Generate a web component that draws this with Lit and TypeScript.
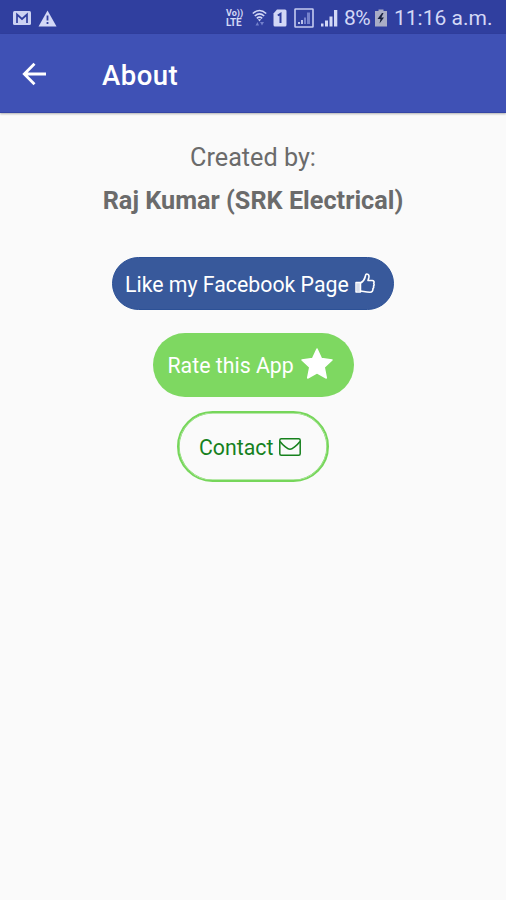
import { LitElement, html, css } from "lit";
import { customElement } from "lit/decorators.js";

@customElement("status-bar")
class StatusBar extends LitElement {
  static styles = css`
    :host {
      display: flex;
      align-items: center;
      box-sizing: border-box;
      height: 34px;
      padding: 2px 14px 0 13px;
      background: #303f9f;
      color: #d3d8f6;
      font: 21px/32px Roboto, sans-serif;
      white-space: nowrap;
    }
    svg { display: block; flex: none; }
    .alert { margin-left: 7px; }
    .volte {
      margin-left: auto;
      width: 18px;
      font-size: 9px;
      line-height: 9px;
      font-weight: 700;
    }
    .volte div { height: 9px; }
    .volte .lte { font-size: 10px; letter-spacing: -0.2px; }
    .wifi { margin-left: 8px; }
    .sim { margin-left: 6px; }
    .boxed { margin-left: 7px; }
    .signal { margin-left: 6px; }
    .pct { margin-left: 6px; width: 28px; letter-spacing: -0.6px; }
    .batt { margin-left: 3px; }
    .time { margin-left: 7px; width: 98px; }
  `;
  render() {
    return html`
      <svg width="18" height="14" viewBox="0 0 18 14">
        <rect width="18" height="14" rx="1.5" fill="#ccd2f2" />
        <path d="M4 12V3.500L9 8l5-4.500V12" fill="none" stroke="#303f9f" stroke-width="1.700" />
      </svg>
      <svg class="alert" width="19" height="17" viewBox="0 0 19 17">
        <path d="M9.500 .5 18.500 16.500H.5Z" fill="#d3d8f6" />
        <path d="M9.500 5.500v5M9.500 12v2" stroke="#303f9f" stroke-width="1.800" />
      </svg>
      <div class="volte"><div>Vo))</div><div class="lte">LTE</div></div>
      <svg class="wifi" width="15" height="18" viewBox="0 0 15 18">
        <g fill="none" stroke="#d3d8f6" stroke-width="1.600">
          <path d="M.8 4.500Q7.500-1.500 14.200 4.500" />
          <path d="M2.800 7Q7.500 2.800 12.200 7" />
          <path d="M4.800 9.300Q7.500 7 10.200 9.300" />
        </g>
        <path d="M5.800 10.200h3.400L7.500 12.500Z" fill="#d3d8f6" />
        <path d="M3.500 16.500 5.500 13l1.500 3.500ZM8 13h4l-2 3.500Z" fill="#7380cb" />
      </svg>
      <svg class="sim" width="14" height="18" viewBox="0 0 14 18">
        <path d="M4 .5H12Q13.500 .5 13.500 2V16Q13.500 17.500 12 17.500H2Q.5 17.500 .5 16V4.500Z" fill="#d3d8f6" />
        <path d="M4.800 6.500 7.500 4.800V14" fill="none" stroke="#303f9f" stroke-width="2" />
      </svg>
      <svg class="boxed" width="20" height="20" viewBox="0 0 20 20">
        <rect x="1" y="1" width="18" height="18" rx=".5" fill="none" stroke="#c5cbf0" stroke-width="1.600" />
        <path d="M4 16v-2h2v2M7 16v-4h2v4" fill="#bac1eb" />
        <path d="M10 16V9.500h2V16M13 16V4.500h3V16" fill="#7682cc" />
      </svg>
      <svg class="signal" width="18" height="18" viewBox="0 0 18 18">
        <path d="M1 17.500v-3h2.500v3M5 17.500v-6h3v6M9.500 17.500v-10h3v10M14 17.500V1h3.300v16.500" fill="#d3d8f6" />
      </svg>
      <span class="pct">8%</span>
      <svg class="batt" width="12" height="18" viewBox="0 0 12 18">
        <path d="M3.500 .5h5V2H12V17.500H0V2h3.500Z" fill="#a9adc6" />
        <path d="M7 4 2.500 10H5.500L4.500 14.500 9 8.500H6.300L8.500 4Z" fill="#16203f" />
      </svg>
      <span class="time">11:16 a.m.</span>
    `;
  }
}

@customElement("app-root")
class AppRoot extends LitElement {
  static styles = css`
    :host {
      display: flex;
      flex-direction: column;
      height: 900px;
      background: #fafafa;
      font-family: Roboto, sans-serif;
      white-space: nowrap;
    }
    svg { display: block; flex: none; }
    .toolbar {
      display: flex;
      align-items: center;
      box-sizing: border-box;
      height: 79px;
      padding: 1px 22px 0;
      background: #3f51b5;
      color: #fff;
      border-bottom: 1px solid #3445a5;
      box-shadow: 0 1px 2px rgba(0, 0, 0, 0.3);
    }
    .title {
      margin: 4px 0 0 55px;
      font-size: 27.500px;
      line-height: 34px;
      font-weight: 500;
      letter-spacing: 0.5px;
    }
    .content {
      display: flex;
      flex-direction: column;
      align-items: center;
      padding-top: 28px;
      color: #6b6b6b;
    }
    .label { font-size: 25.200px; line-height: 34px; }
    .author {
      margin-top: 9px;
      font-size: 25.250px;
      line-height: 34px;
      font-weight: 700;
    }
    .btn {
      display: flex;
      align-items: center;
      box-sizing: border-box;
      border-radius: 36px;
      color: #fff;
      font-size: 21.300px;
      line-height: 28px;
    }
    .facebook {
      width: 282px;
      height: 53px;
      margin-top: 39px;
      padding: 2px 0 0 12px;
      background: #38599b;
      border: 1px solid #2c5196;
    }
    .facebook span { width: 230px; }
    .facebook svg { margin-top: -3px; }
    .rate { width: 201px; height: 64px; margin-top: 23px; padding: 2px 0 0 15px; background: #7ed861; }
    .rate span { width: 132px; }
    .rate svg { margin-top: -5px; }
    .contact {
      width: 152px;
      height: 71px;
      margin-top: 14px;
      padding: 2px 0 0 20px;
      border: 2px solid #76d65a;
      box-shadow: inset 0 0 0 0.600px #76d65a;
      color: #16811d;
    }
    .contact span { width: 80px; }
    .contact svg { margin-top: -2px; }
  `;
  render() {
    return html`
      <status-bar></status-bar>
      <header class="toolbar">
        <svg width="25" height="24" viewBox="0 0 25 24">
          <path d="M12.500 1.800 2.300 12l10.200 10.200M2.500 12H24" fill="none" stroke="#fff" stroke-width="2.800" />
        </svg>
        <div class="title">About</div>
      </header>
      <main class="content">
        <div class="label">Created by:</div>
        <div class="author">Raj Kumar (SRK Electrical)</div>
        <div class="btn facebook">
          <span>Like my Facebook Page</span>
          <svg width="20" height="21" viewBox="0 0 20 21">
            <path d="M1 9.500H5.500V19H1Z" fill="none" stroke="#fff" stroke-width="1.500" stroke-linejoin="round" />
            <path d="M1.500 10h3.500v8.500h-3.500Z" fill="#fff" fill-opacity=".8" />
            <path d="M5.500 10C8 8.500 9.800 6 10.300 3.500 10.500 2 10.800 1 11.800 1c2 0 2.500 1.700 2 3.800L13 7.500h4.200c1.600 0 2.300 1.500 1.500 2.800.6 1 .5 2-.2 2.800.4 1 .1 2-.6 2.600.2 2-.8 3.500-2.900 3.500-4.500 0-6-.8-9.500-1.200" fill="none" stroke="#fff" stroke-width="1.600" stroke-linejoin="round" />
          </svg>
        </div>
        <div class="btn rate">
          <span>Rate this App</span>
          <svg width="34" height="34" viewBox="0 0 34 34">
            <path d="M17 2 21.400 11.600 32 13 24.200 20.200 26.300 31 17 25.800 7.700 31 9.800 20.200 2 13 12.600 11.600Z" fill="#fff" stroke="#fff" stroke-width="1.500" stroke-linejoin="round" />
          </svg>
        </div>
        <div class="btn contact">
          <span>Contact</span>
          <svg width="22" height="18" viewBox="0 0 22 18">
            <rect x=".8" y=".8" width="20.400" height="16.400" rx="1.500" fill="none" stroke="#16811d" stroke-width="1.500" />
            <path d="M1 3.500C4 7.500 9 11.200 11 11.200S18 7.500 21 3.500" fill="none" stroke="#16811d" stroke-width="1.500" />
          </svg>
        </div>
      </main>
    `;
  }
}
